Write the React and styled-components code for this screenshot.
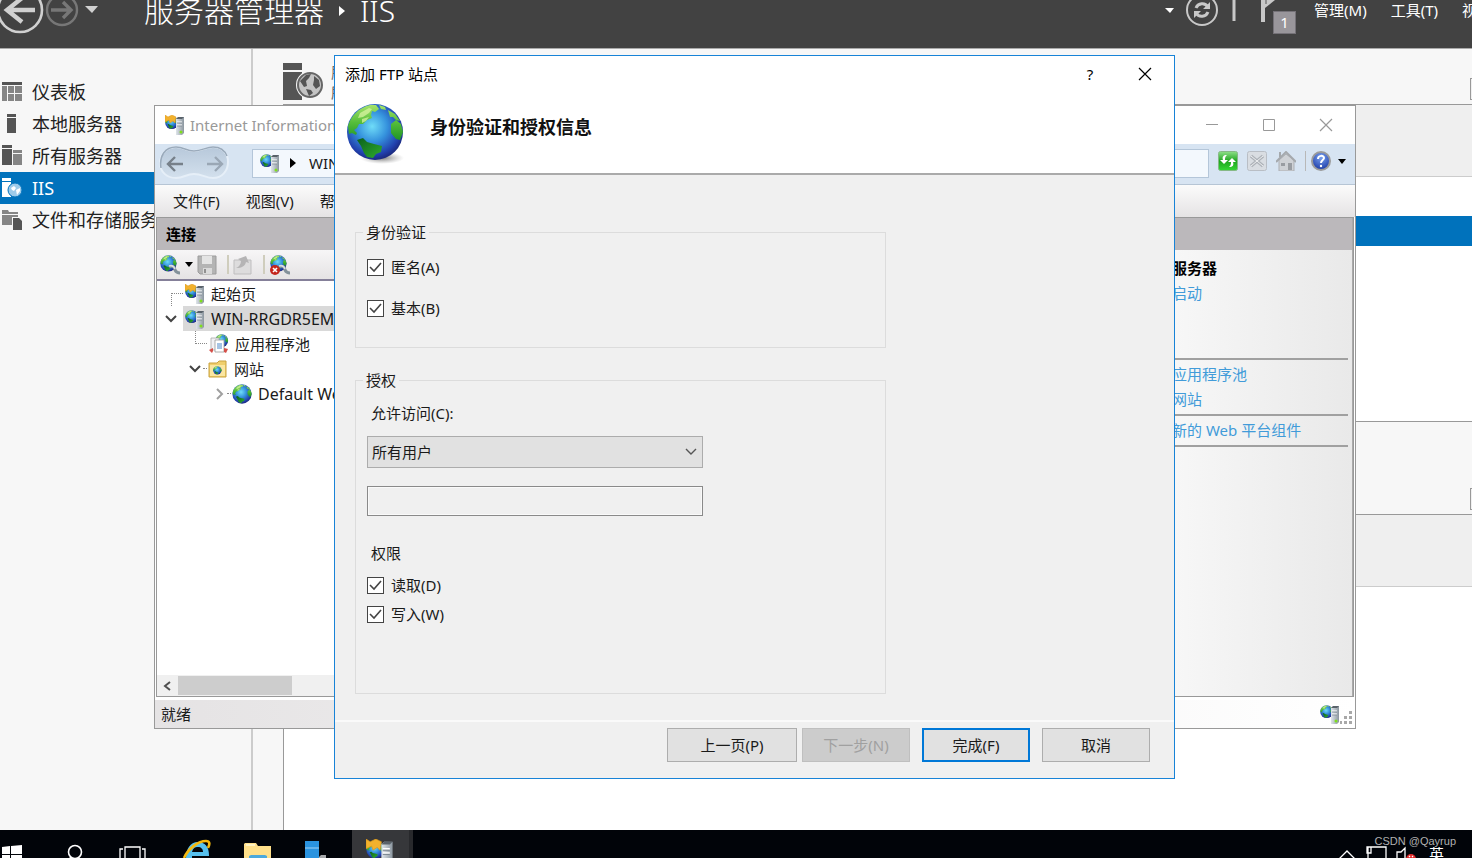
import React, { useState } from "react";
import styled, { createGlobalStyle } from "styled-components";

const GlobalStyle = createGlobalStyle`
  * {
    box-sizing: border-box;
  }

  body {
    margin: 0;
    font-family: "Noto Sans", "Noto Sans CJK SC", sans-serif;
    font-size: 15px;
    line-height: 20px;
    color: #1a1a1a;
  }

  button, input, select {
    font: inherit;
    color: inherit;
    margin: 0;
  }

  svg {
    display: block;
    flex: none;
  }
`;

/* ---------- icons ---------- */

function Defs() {
  return (
    <HiddenSvg aria-hidden="true">
      <defs>
        <radialGradient id="ocean" cx="0.45" cy="0.4" r="0.6">
          <stop offset="0" stopColor="#6fdcf8" />
          <stop offset="0.45" stopColor="#3592dd" />
          <stop offset="0.85" stopColor="#2140ad" />
          <stop offset="1" stopColor="#1b2a80" />
        </radialGradient>
        <linearGradient id="land" x1="0" y1="0" x2="0" y2="1">
          <stop offset="0" stopColor="#a5e36a" />
          <stop offset="0.5" stopColor="#55bd3a" />
          <stop offset="1" stopColor="#1f9426" />
        </linearGradient>
        <linearGradient id="darkLand" x1="0" y1="0" x2="1" y2="1">
          <stop offset="0" stopColor="#0b5f1c" />
          <stop offset="1" stopColor="#2fae2c" />
        </linearGradient>
        <linearGradient id="tower" x1="0" y1="0" x2="1" y2="0">
          <stop offset="0" stopColor="#dfe5ea" />
          <stop offset="1" stopColor="#8b969f" />
        </linearGradient>
        <linearGradient id="green" x1="0" y1="0" x2="0" y2="1">
          <stop offset="0" stopColor="#8fe08a" />
          <stop offset="0.5" stopColor="#1fa51f" />
          <stop offset="1" stopColor="#35d835" />
        </linearGradient>
        <linearGradient id="pill" x1="0" y1="0" x2="0" y2="1">
          <stop offset="0" stopColor="#b7c8da" />
          <stop offset="1" stopColor="#d3e0ed" />
        </linearGradient>
        <radialGradient id="help" cx="0.5" cy="0.3" r="0.7">
          <stop offset="0" stopColor="#7aa2f0" />
          <stop offset="1" stopColor="#1b3aa6" />
        </radialGradient>
        <radialGradient id="shade">
          <stop offset="0" stopColor="#555" stopOpacity="0.8" />
          <stop offset="1" stopColor="#999" stopOpacity="0" />
        </radialGradient>
      </defs>
    </HiddenSvg>
  );
}

function GlobeShape() {
  return (
    <g>
      <circle cx="29" cy="29" r="28" fill="url(#ocean)" />
      <path
        d="M2 23C5 13 12 5 24 2l6 0 3 4-4 3-3-1-1 4 1 3-5 2-4 4-4 0-2 4-3 2 3 3-1 2-4-2-3 1zM42 7l7 4 5 7-4-1-3-3-3 0zM33 2l6 2 1 3-5-1zM45 21l5-4 5 4 2 8-3 8-4-1-5-6z"
        fill="url(#land)"
      />
      <path d="M11 37l6-2 4 4 7 2 8 2-1 6-5 2-3 4-6-1-3-4-3-7z" fill="url(#darkLand)" />
      <path d="M14 10l9-5 3 1-3 4-6 4-5 1zM16 16l7-2-3 4-4 2z" fill="#def5a6" opacity="0.7" />
    </g>
  );
}

function BigGlobe() {
  return (
    <svg width="62" height="62" viewBox="0 0 62 62">
      <ellipse cx="36" cy="55" rx="22" ry="6" fill="url(#shade)" />
      <GlobeShape />
    </svg>
  );
}

function SmallGlobe() {
  return (
    <svg width="20" height="20" viewBox="0 0 58 58">
      <GlobeShape />
    </svg>
  );
}

function ServerGlobe({ size = 20, arrow }) {
  return (
    <svg width={size} height={size} viewBox="0 0 20 20">
      <g transform="translate(0 1) scale(0.23)">
        <GlobeShape />
      </g>
      {arrow && (
        <path d="M0 0l3 2 4-2 4 2-1 6-2-2-3 2-1-3-4 2z" fill="#f2b12d" stroke="#d9971a" strokeWidth="0.5" />
      )}
      <path d="M11 4l2-2h6v16l-2 2h-6z" fill="url(#tower)" />
      <path d="M13 2h6l-2 2h-6z" fill="#59626a" />
      <path d="M12 7h5M12 10h5" stroke="#fff" strokeWidth="1.2" />
      <path d="M12 8h5M12 11h5" stroke="#77828c" strokeWidth="0.7" />
      <circle cx="16" cy="17" r="1.5" fill="#7fe01c" />
    </svg>
  );
}

function ConnectIcon({ remove }) {
  return (
    <svg width="22" height="22" viewBox="0 0 22 22">
      <g transform="translate(1 1) scale(0.29)">
        <GlobeShape />
      </g>
      <path d="M10 13c3-2 6 0 6 3 1 2 3 3 5 3" fill="none" stroke="#83919a" strokeWidth="3" />
      <path d="M10 12c3-1 5 0 6 3" fill="none" stroke="#d6dde2" strokeWidth="1.5" />
      {remove && (
        <g>
          <circle cx="6" cy="16" r="5" fill="#c4261d" />
          <path d="M4 14l4 4M8 14l-4 4" stroke="#fff" strokeWidth="1.6" />
        </g>
      )}
    </svg>
  );
}

function SaveIcon() {
  return (
    <svg width="20" height="20" viewBox="0 0 20 20">
      <path d="M1 1h18v18H3l-2-2z" fill="#b4b4b4" stroke="#9c9c9c" />
      <path d="M5 1h10v8H5z" fill="#e4e4e4" />
      <path d="M6 13h9v6H6z" fill="#dadada" />
      <path d="M7 14h2v4H7z" fill="#909090" />
    </svg>
  );
}

function PasteIcon() {
  return (
    <svg width="20" height="20" viewBox="0 0 20 20">
      <path d="M1 5h17v14H1z" fill="#dddcdd" stroke="#bfbebf" />
      <path d="M3 13c3-1 5-4 5-7L5 4l8-3 3 7-3-1c-1 4-4 6-10 6z" fill="#b5b4b5" />
    </svg>
  );
}

function PoolIcon() {
  return (
    <svg width="20" height="20" viewBox="0 0 20 20">
      <g transform="translate(6 0) scale(0.23)">
        <GlobeShape />
      </g>
      <path d="M2 4h8v12H2z" fill="#f1f1f4" stroke="#aaa" strokeWidth="0.8" />
      <path d="M6 6h9v12H6z" fill="#fff" stroke="#999" strokeWidth="0.8" />
      <path d="M8 10h5M8 12h5M8 14h5" stroke="#4d88c8" />
      <path d="M0 16l4-2v3l-1 2zM19 15l-4-1v4l2 1z" fill="#d4504a" />
    </svg>
  );
}

function SitesIcon() {
  return (
    <svg width="20" height="20" viewBox="0 0 20 20">
      <path d="M1 4h8l2-2h7v16H1z" fill="#f0cf6c" stroke="#c9a23e" />
      <path d="M2 6h15v11H2z" fill="#fae6a0" />
      <g transform="translate(5 7) scale(0.15)">
        <GlobeShape />
      </g>
    </svg>
  );
}

function NavArrows() {
  return (
    <svg width="100" height="46" viewBox="0 -12 100 46" fill="none">
      <circle cx="20" cy="10" r="22" stroke="#d0d0d0" strokeWidth="2.6" />
      <path d="M35 10H8M22 -2L7 10l15 12" stroke="#d0d0d0" strokeWidth="4.4" />
      <circle cx="62" cy="10" r="15" stroke="#777" strokeWidth="2.4" />
      <path d="M51 10h20M63 2l8 8-8 8" stroke="#777" strokeWidth="3.4" />
      <path d="M85 6h13l-6 7z" fill="#d0d0d0" />
    </svg>
  );
}

function TopTools() {
  return (
    <svg width="140" height="46" viewBox="0 -12 140 46" fill="none">
      <path d="M5 8h9l-4 5z" fill="#fff" />
      <circle cx="42" cy="10" r="15" stroke="#c8c8c8" strokeWidth="2" />
      <path d="M36 8c2-5 9-6 12-1M48 12c-2 5-9 6-12 1" stroke="#c8c8c8" strokeWidth="3" />
      <path d="M50 2v7h-7zM34 18v-7h7z" fill="#c8c8c8" />
      <path d="M74 -12v33" stroke="#c8c8c8" strokeWidth="3" />
      <path d="M101 -12h4v34h-4z" fill="#c8c8c8" />
      <path d="M105 8l10-8 8-12h-18z" fill="#c8c8c8" />
      <path d="M106 4V-12" stroke="#555" strokeWidth="1" />
    </svg>
  );
}

function SideIcon({ kind }) {
  return (
    <svg width="22" height="22" viewBox="0 0 22 22">
      {kind === "dashboard" && (
        <g fill="#858585">
          <path d="M2 1h20v3H2z" fill="#555" />
          <path d="M2 5h5v15H2zM8 5h6v7H8zM15 5h7v7h-7zM8 13h6v7H8zM15 13h7v7h-7z" />
        </g>
      )}
      {kind === "local" && (
        <g fill="#555">
          <path d="M7 1h9v3H7zM7 5h9v15H7z" />
        </g>
      )}
      {kind === "all" && (
        <g>
          <path d="M2 0h10v3H2zM2 4h10v16H2z" fill="#555" />
          <path d="M13 5h9v3h-9zM13 9h9v11h-9z" fill="#858585" />
        </g>
      )}
      {kind === "iis" && (
        <g>
          <path d="M2 1h9v3H2zM2 5h9v15H2z" fill="#fff" />
          <circle cx="15" cy="13" r="7" fill="#9ecbea" stroke="#0072bc" />
          <path d="M11 11l3-2 2 2-2 3-2-1zM16 13l4-2v3l-3 4z" fill="#fff" />
        </g>
      )}
      {kind === "storage" && (
        <g>
          <path d="M2 1h6l1 2h9v2H2zM2 6h10v10H2zM12 6h6v2h-6z" fill="#858585" />
          <path d="M13 9h6l3 3v9h-9z" fill="#555" />
        </g>
      )}
    </svg>
  );
}

function HeadIcon() {
  return (
    <svg width="42" height="38" viewBox="0 0 42 38">
      <path d="M0 0h19v7H0zM0 9h19v28H0z" fill="#555" />
      <circle cx="27" cy="22" r="14" fill="#f7f7f7" />
      <circle cx="27" cy="22" r="12" fill="#c4c4c4" stroke="#666" strokeWidth="2" />
      <path d="M17 18l6-6 5-1-2 4-3 3 1 5-3 1zM31 13l5 4 1 6-4 3-3-4 1-5zM23 26l5 1 2 3-4 3z" fill="#555" />
    </svg>
  );
}

function TaskIcon({ kind }) {
  return (
    <svg width="61" height="28" viewBox="0 0 61 28" fill="none">
      {kind === "search" && (
        <g stroke="#fff" strokeWidth="1.6">
          <circle cx="31" cy="22" r="6.5" />
          <path d="M27 27l-4 5" />
        </g>
      )}
      {kind === "taskview" && (
        <path d="M20 28V17h15v11M18 19h-3v9M37 19h3v9" stroke="#fff" strokeWidth="1.3" />
      )}
      {kind === "ie" && (
        <g>
          <path d="M20 28c0-9 4-16 12-16 7 0 11 5 11 13v3H19z" fill="#57c1ee" />
          <path d="M26 22c1-4 3-5 6-5s5 2 5 5z" fill="#04060a" />
          <path d="M26 26h17v2H26z" fill="#04060a" />
          <path d="M18 28C22 19 32 11 40 11c4 0 4 3 2 7" stroke="#f5b90f" strokeWidth="2.6" />
        </g>
      )}
      {kind === "folder" && (
        <g>
          <path d="M17 28V14l1-1h11l2 3h13v12z" fill="#ffe08a" />
          <path d="M19 14h9v2h-9z" fill="#fff3c4" />
          <path d="M22 28v-2l2-1h14l2 1v2z" fill="#4ba9dc" />
        </g>
      )}
      {kind === "manager" && (
        <g>
          <path d="M17 11h14v17H17z" fill="#2a93df" />
          <path d="M17 18h14" stroke="#9fd2f5" />
          <path d="M31 27l2-2h5v3h-7z" fill="#a7a9ab" />
        </g>
      )}
    </svg>
  );
}

function StartIcon() {
  return (
    <svg width="44" height="28" viewBox="0 0 44 28" fill="#fff">
      <path d="M2 17l8-1v8H2zM11 16l11-1v9H11zM2 25h8v3H2zM11 25h11v3H11z" />
    </svg>
  );
}

function TrayIcons() {
  return (
    <svg width="84" height="28" viewBox="0 0 84 28" fill="none" stroke="#fff" strokeWidth="1.3">
      <path d="M2 29l8-8 8 8M31 28V17h18v11M30 17h4v6h-4zM60 28v-6h4l4-4v10" />
      <circle cx="74" cy="29" r="5" fill="#e02b2b" stroke="none" />
      <path d="M72 26l1 1M76 26l-1 1" />
    </svg>
  );
}

function Pill() {
  return (
    <svg width="72" height="34" viewBox="0 0 72 34" fill="none">
      <path
        d="M17 1c8 0 10 4 18 4s12-4 19-4c9 0 15 6 15 15s-6 16-15 16c-7 0-11-4-19-4s-10 4-18 4C8 32 1 26 1 17S8 1 17 1z"
        fill="url(#pill)"
        stroke="#e6eff8"
        strokeWidth="2"
      />
      <path d="M2 22C0 10 6 1 17 1c8 0 10 4 18 4s12-4 19-4c7 0 12 4 14 9" stroke="#9aaabb" strokeWidth="1.5" />
      <path d="M24 18H10M16 11l-7 7 7 7" stroke="#77808a" strokeWidth="2.4" />
      <path d="M48 18h14M56 11l7 7-7 7" stroke="#9aa7b5" strokeWidth="2.4" />
    </svg>
  );
}

function AddressIcon({ kind }) {
  return (
    <svg width="20" height="20" viewBox="0 0 20 20" fill="none">
      {kind === "refresh" && (
        <g>
          <rect x="0.5" y="0.5" width="19" height="19" rx="2" fill="url(#green)" stroke="#86b886" />
          <path
            d="M9 4C5 4 4 6 5 9H2l4 4 4-4H7c0-2 0-3 2-5zM11 16c4 0 5-2 4-5h3l-4-4-4 4h3c0 2 0 3-2 5z"
            fill="#fff"
          />
        </g>
      )}
      {kind === "stop" && (
        <g>
          <rect x="0.5" y="0.5" width="19" height="19" rx="2" fill="#d9dde2" stroke="#b9bec5" />
          <path d="M4 5l12 10M16 5L4 15" stroke="#aeb3b9" strokeWidth="3.5" />
          <path d="M4 5l12 10M16 5L4 15" stroke="#eef0f2" />
        </g>
      )}
      {kind === "home" && (
        <g>
          <path d="M3 9v11h15V9l-8-6z" fill="#cfd2d6" stroke="#acafb3" />
          <path d="M0 11L10 1l10 10M4 6V1" stroke="#a5a9ad" strokeWidth="2" />
          <path d="M5 12h4v3H5zM12 12h4v7h-4z" fill="#999da2" />
        </g>
      )}
      {kind === "help" && (
        <g>
          <circle cx="10" cy="10" r="9" fill="url(#help)" stroke="#9b9b9b" strokeWidth="2" />
          <path d="M7 8c0-4 6-4 6-1 0 2-3 2-3 5" stroke="#fff" strokeWidth="2" />
          <circle cx="10" cy="15" r="1.2" fill="#fff" />
        </g>
      )}
    </svg>
  );
}

function Triangle() {
  return (
    <svg width="8" height="5" viewBox="0 0 8 5">
      <path d="M0 0h8L4 5z" fill="#000" />
    </svg>
  );
}

function CrossIcon() {
  return (
    <svg width="14" height="14" viewBox="0 0 14 14" fill="none" stroke="currentColor" strokeWidth="1.2">
      <path d="M1 1l12 12M13 1L1 13" />
    </svg>
  );
}

function Chevron({ open }) {
  return (
    <svg width="12" height="12" viewBox="0 0 12 12" fill="none">
      {open ? (
        <path d="M1 3l5 5 5-5" stroke="#444" strokeWidth="2" />
      ) : (
        <path d="M4 1l5 5-5 5" stroke="#a0a0a0" strokeWidth="2" />
      )}
    </svg>
  );
}

/* ---------- server manager ---------- */

const sideItems = [
  { kind: "dashboard", label: "仪表板" },
  { kind: "local", label: "本地服务器" },
  { kind: "all", label: "所有服务器" },
  { kind: "iis", label: "IIS", active: true },
  { kind: "storage", label: "文件和存储服务" },
];

function ServerManager() {
  return (
    <Manager>
      <TopBar>
        <NavArrows />
        <Crumb>
          服务器管理器
          <svg width="8" height="12" viewBox="0 0 8 12">
            <path d="M1 1l6 5-6 5z" fill="#fff" />
          </svg>
          IIS
        </Crumb>
        <TopRight>
          <FlagBox>
            <TopTools />
            <Badge>1</Badge>
          </FlagBox>
          <TopMenu>
            <TopLink>管理(M)</TopLink>
            <TopLink>工具(T)</TopLink>
            <TopLink>视图(V)</TopLink>
          </TopMenu>
        </TopRight>
      </TopBar>
      <ManagerBody>
        <Sidebar>
          {sideItems.map((item) => (
            <SideItem key={item.kind} href="#" $active={item.active}>
              <SideIcon kind={item.kind} />
              {item.label}
            </SideItem>
          ))}
        </Sidebar>
        <Tiles>
          <TileHead $height={55}>
            <HeadIcon />
            <HeadText>
              服务器
              <span>所有服务器</span>
            </HeadText>
            <TaskButton aria-label="任务" />
          </TileHead>
          <Tile $height={317}>
            <TileFilter />
            <TileSelected />
          </Tile>
          <TileHead $height={92}>
            <TaskButton aria-label="任务" />
          </TileHead>
          <Tile>
            <TileFilter />
          </Tile>
        </Tiles>
      </ManagerBody>
    </Manager>
  );
}

/* ---------- IIS window ---------- */

function IISManager() {
  return (
    <IISWindow>
      <IISTitle>
        <ServerGlobe arrow />
        <span>Internet Information</span>
        <IISControls>
          <IconButton aria-label="最小化">
            <svg width="12" height="12" viewBox="0 0 12 12">
              <path d="M0 5.5h12" stroke="currentColor" />
            </svg>
          </IconButton>
          <IconButton aria-label="最大化">
            <svg width="12" height="12" viewBox="0 0 12 12">
              <path d="M0.5 0.5h11v11H0.5z" fill="none" stroke="currentColor" />
            </svg>
          </IconButton>
          <IconButton aria-label="关闭">
            <CrossIcon />
          </IconButton>
        </IISControls>
      </IISTitle>
      <AddressBar>
        <Pill />
        <Address>
          <ServerGlobe />
          <svg width="6" height="10" viewBox="0 0 6 10">
            <path d="M0 0l6 5-6 5z" />
          </svg>
          <span>WIN-RRGDR5EM</span>
        </Address>
        <AddressTools>
          <AddressIcon kind="refresh" />
          <AddressIcon kind="stop" />
          <AddressIcon kind="home" />
          <HelpGroup>
            <AddressIcon kind="help" />
            <Triangle />
          </HelpGroup>
        </AddressTools>
      </AddressBar>
      <MenuBar>
        <span>文件(F)</span>
        <span>视图(V)</span>
        <span>帮助(H)</span>
      </MenuBar>
      <Panels>
        <ConnectionPanel>
          <PanelHead>连接</PanelHead>
          <ToolBar>
            <ConnectIcon />
            <Triangle />
            <SaveIcon />
            <ToolSeparator />
            <PasteIcon />
            <ToolSeparator />
            <ConnectIcon remove />
          </ToolBar>
          <Tree>
            <TreeRow $depth={0}>
              <Dots $corner />
              <ServerGlobe arrow />
              起始页
            </TreeRow>
            <TreeRow $depth={0} $latin>
              <Chevron open />
              <TreeSelected>
                <ServerGlobe />
                WIN-RRGDR5EM
              </TreeSelected>
            </TreeRow>
            <TreeRow $depth={1}>
              <Dots $rail />
              <PoolIcon />
              应用程序池
            </TreeRow>
            <TreeRow $depth={1}>
              <Chevron open />
              <ShortDots />
              <SitesIcon />
              网站
            </TreeRow>
            <TreeRow $depth={2} $latin>
              <Chevron />
              <ShortDots />
              <SmallGlobe />
              Default Web
            </TreeRow>
          </Tree>
          <ScrollBar>
            <svg width="8" height="10" viewBox="0 0 8 10" fill="none">
              <path d="M7 1L2 5l5 4" stroke="#505050" strokeWidth="2" />
            </svg>
            <ScrollThumb />
          </ScrollBar>
        </ConnectionPanel>
        <ActionPanel>
          <PanelHead />
          <Actions>
            <ActionTitle>管理服务器</ActionTitle>
            <ActionLink href="#">重新启动</ActionLink>
            <ActionGap />
            <ActionRule />
            <ActionLink href="#">查看应用程序池</ActionLink>
            <ActionLink href="#">查看网站</ActionLink>
            <ActionRule />
            <ActionLink href="#">获取新的 Web 平台组件</ActionLink>
            <ActionRule />
          </Actions>
        </ActionPanel>
      </Panels>
      <StatusBar>
        就绪
        <StatusIcons>
          <ServerGlobe />
          <svg width="12" height="13" viewBox="1 0 12 13" fill="#a8a8a8">
            <path d="M10 0h3v3h-3zM5 5h3v3H5zM10 5h3v3h-3zM1 10h2v3H1zM5 10h3v3H5zM10 10h3v3h-3z" />
          </svg>
        </StatusIcons>
      </StatusBar>
    </IISWindow>
  );
}

/* ---------- wizard dialog ---------- */

function CheckField({ id, label }) {
  const [checked, setChecked] = useState(true);

  return (
    <CheckRow htmlFor={id}>
      <CheckBox>
        <input id={id} type="checkbox" checked={checked} onChange={(e) => setChecked(e.target.checked)} />
        {checked && (
          <svg width="17" height="17" viewBox="0 0 17 17" fill="none">
            <path d="M3 8l4 4 7-8" stroke="#444" strokeWidth="1.6" />
          </svg>
        )}
      </CheckBox>
      {label}
    </CheckRow>
  );
}

function FtpDialog() {
  return (
    <Dialog role="dialog" aria-labelledby="ftp-title">
      <DialogTitle>
        <span id="ftp-title">添加 FTP 站点</span>
        <DialogControls>
          <IconButton aria-label="帮助">?</IconButton>
          <IconButton aria-label="关闭">
            <CrossIcon />
          </IconButton>
        </DialogControls>
      </DialogTitle>
      <Banner>
        <BigGlobe />
        <BannerTitle>身份验证和授权信息</BannerTitle>
      </Banner>
      <DialogBody>
        <Group>
          <legend>身份验证</legend>
          <AuthFields>
            <CheckField id="anonymous" label="匿名(A)" />
            <CheckField id="basic" label="基本(B)" />
          </AuthFields>
        </Group>
        <Group>
          <legend>授权</legend>
          <AccessFields>
            <FieldLabel htmlFor="access">允许访问(C):</FieldLabel>
            <SelectBox>
              <select id="access" defaultValue="all">
                <option value="all">所有用户</option>
              </select>
              <svg width="12" height="8" viewBox="0 0 12 8" fill="none">
                <path d="M1 1l5 5 5-5" stroke="#555" strokeWidth="1.4" />
              </svg>
            </SelectBox>
            <UserInput type="text" aria-label="用户" disabled />
          </AccessFields>
          <PermissionFields>
            <FieldLabel as="span">权限</FieldLabel>
            <CheckList>
              <CheckField id="read" label="读取(D)" />
              <CheckField id="write" label="写入(W)" />
            </CheckList>
          </PermissionFields>
        </Group>
      </DialogBody>
      <Footer>
        <Pager>
          <DialogButton $wide>上一页(P)</DialogButton>
          <DialogButton disabled>下一步(N)</DialogButton>
        </Pager>
        <DialogButton $primary>完成(F)</DialogButton>
        <DialogButton>取消</DialogButton>
      </Footer>
    </Dialog>
  );
}

function TaskBar() {
  return (
    <Bar>
      <TaskBarButton aria-label="开始">
        <StartIcon />
      </TaskBarButton>
      {["search", "taskview", "ie", "folder", "manager"].map((kind) => (
        <TaskBarButton key={kind} aria-label={kind}>
          <TaskIcon kind={kind} />
        </TaskBarButton>
      ))}
      <TaskBarButton aria-label="IIS" $active>
        <ServerGlobe size={28} arrow />
      </TaskBarButton>
      <Tray>
        <TrayIcons />
        <span>英</span>
      </Tray>
      <Watermark>CSDN @Qayrup</Watermark>
    </Bar>
  );
}

function App() {
  return (
    <Desktop>
      <GlobalStyle />
      <Defs />
      <ServerManager />
      <IISManager />
      <FtpDialog />
      <TaskBar />
    </Desktop>
  );
}

const HiddenSvg = styled.svg`
  position: absolute;
  width: 0;
  height: 0;
`;

const Desktop = styled.div`
  position: relative;
  display: flex;
  flex-direction: column;
  height: 100vh;
  overflow: hidden;
  background: #fff;
`;

const Manager = styled.div`
  flex: 1;
  display: flex;
  flex-direction: column;
  min-height: 0;
`;

const TopBar = styled.header`
  display: flex;
  align-items: center;
  height: 49px;
  margin-right: -38px;
  padding-bottom: 26px;
  background: #424242;
  border-bottom: 1px solid #aaa;
`;

const Crumb = styled.h1`
  display: flex;
  align-items: center;
  gap: 14px;
  margin: 0 0 0 44px;
  font-size: 30px;
  font-weight: 300;
  line-height: 40px;
  color: #fff;
`;

const TopRight = styled.div`
  display: flex;
  align-items: center;
  gap: 14px;
  margin-left: auto;
`;

const FlagBox = styled.div`
  position: relative;
`;

const Badge = styled.span`
  position: absolute;
  right: 4px;
  bottom: 0;
  width: 23px;
  height: 23px;
  background: #99969b;
  border: 1px solid #757278;
  color: #fff;
  text-align: center;
`;

const TopMenu = styled.nav`
  display: flex;
  gap: 24px;
  padding-bottom: 2px;
`;

const TopLink = styled.button`
  padding: 0;
  border: none;
  background: none;
  color: #fff;
  white-space: nowrap;
`;

const ManagerBody = styled.div`
  flex: 1;
  display: flex;
  min-height: 0;
`;

const Sidebar = styled.nav`
  width: 253px;
  padding-top: 27px;
  background: #f7f7f7;
  border-right: 2px solid #ccc;
`;

const SideItem = styled.a`
  display: flex;
  align-items: center;
  gap: 10px;
  height: 32px;
  font-size: 18px;
  text-decoration: none;
  color: ${(props) => (props.$active ? "#fff" : "#222")};
  background: ${(props) => (props.$active ? "#0072bc" : "transparent")};
`;

const Tiles = styled.main`
  flex: 1;
  display: flex;
  flex-direction: column;
  padding-left: 30px;
  background: #f7f7f7;
`;

const TileHead = styled.div`
  display: flex;
  align-items: center;
  gap: 6px;
  flex: none;
  height: ${(props) => props.$height}px;
  padding-top: 10px;
`;

const HeadText = styled.div`
  display: flex;
  flex-direction: column;
  color: #666;
`;

const TaskButton = styled.button`
  align-self: flex-end;
  width: 40px;
  height: 22px;
  margin: 0 -38px 4px auto;
  border: 1px solid #999;
  background: #f0f0f0;
`;

const Tile = styled.section`
  flex: ${(props) => (props.$height ? "none" : "1")};
  height: ${(props) => (props.$height ? props.$height + 1 + "px" : "auto")};
  background: #fff;
  border-top: 1px solid #999;
  border-left: 1px solid #999;
  border-bottom: ${(props) => (props.$height ? "1px solid #999" : "none")};
`;

const TileFilter = styled.div`
  height: 72px;
  background: #efefef;
  border-bottom: 1px solid #ccc;
`;

const TileSelected = styled.div`
  height: 30px;
  margin-top: 39px;
  background: #0072bc;
`;

const IISWindow = styled.section`
  position: absolute;
  top: 105px;
  right: 116px;
  bottom: 129px;
  left: 154px;
  display: flex;
  flex-direction: column;
  background: #fff;
  border: 1px solid #999;
`;

const IISTitle = styled.div`
  display: flex;
  align-items: center;
  gap: 5px;
  height: 38px;
  padding-left: 10px;
  color: #999;
`;

const IISControls = styled.div`
  display: flex;
  gap: 37px;
  margin-left: auto;
  padding-right: 19px;
`;

const IconButton = styled.button`
  display: flex;
  align-items: center;
  justify-content: center;
  width: 20px;
  height: 20px;
  padding: 0;
  border: none;
  background: none;
`;

const AddressBar = styled.div`
  display: flex;
  align-items: center;
  height: 41px;
  padding: 0 9px 2px 4px;
  background: #d7e4f2;
  border-bottom: 1px solid #b6c5d5;
`;

const Address = styled.div`
  flex: 1;
  display: flex;
  align-items: center;
  gap: 10px;
  height: 29px;
  margin-left: 21px;
  padding-left: 7px;
  background: #f3f8fd;
  border: 1px solid #b4c6d9;

  span {
    margin-left: 3px;
  }
`;

const AddressTools = styled.div`
  display: flex;
  gap: 9px;
  padding: 0 0 4px 9px;
`;

const HelpGroup = styled.div`
  display: flex;
  align-items: center;
  gap: 7px;
  padding-left: 5px;
  border-left: 1px solid #b8b8b8;
`;

const MenuBar = styled.div`
  display: flex;
  align-items: center;
  gap: 26px;
  height: 32px;
  padding-left: 18px;
  background: linear-gradient(#fbfbfb, #e5e3e4);
`;

const Panels = styled.div`
  flex: 1;
  display: flex;
  justify-content: space-between;
  min-height: 0;
  margin: 0 1px;
  border: 1px solid #999;
`;

const ConnectionPanel = styled.div`
  display: flex;
  flex-direction: column;
  width: 250px;
`;

const PanelHead = styled.div`
  height: 32px;
  padding: 6px 9px;
  background: #bbb8bb;
  font-weight: 700;
  color: #000;
`;

const ToolBar = styled.div`
  display: flex;
  align-items: center;
  gap: 4px;
  height: 31px;
  padding-left: 2px;
  background: linear-gradient(#f7f6f7, #e5e3e4);
  border-bottom: 2px solid #858099;
`;

const ToolSeparator = styled.span`
  width: 2px;
  height: 19px;
  margin-left: 6px;
  background: #cfcdbd;
`;

const Tree = styled.div`
  flex: 1;
  background: #fff;
`;

const TreeRow = styled.div`
  display: flex;
  align-items: center;
  gap: 6px;
  height: 25px;
  padding-left: ${(props) => 8 + props.$depth * 24}px;
  font-size: ${(props) => (props.$latin ? 16 : 15)}px;
  white-space: nowrap;
`;

const TreeSelected = styled.span`
  display: flex;
  align-items: center;
  flex: 1;
  gap: 6px;
  height: 25px;
  padding-left: 2px;
  background: #d9d9d9;
`;

const Dots = styled.span`
  align-self: ${(props) => (props.$rail ? "flex-start" : "flex-end")};
  width: 12px;
  height: 13px;
  margin-left: 6px;
  margin-right: -4px;
  border-left: 1px dotted #888;
  border-top: ${(props) => (props.$corner ? "1px dotted #888" : "none")};
  border-bottom: ${(props) => (props.$rail ? "1px dotted #888" : "none")};
`;

const ShortDots = styled.span`
  width: 4px;
  margin: 0 -5px 0 -4px;
  border-top: 1px dotted #888;
`;

const ScrollBar = styled.div`
  display: flex;
  align-items: center;
  gap: 7px;
  height: 21px;
  padding-left: 6px;
  background: #f0f0f0;
`;

const ScrollThumb = styled.div`
  width: 114px;
  height: 19px;
  background: #cdcdcd;
`;

const ActionPanel = styled.div`
  width: 218px;
  background: linear-gradient(90deg, #fafafa, #e9e9e9);
  border-right: 1px solid #aaa;
`;

const Actions = styled.div`
  padding: 6px 4px 0 0;
`;

const ActionTitle = styled.div`
  padding-left: 7px;
  line-height: 25px;
  font-weight: 700;
  color: #000;
`;

const ActionLink = styled.a`
  display: block;
  padding-left: 7px;
  line-height: 25px;
  color: #419bd9;
  text-decoration: none;
`;

const ActionGap = styled.div`
  height: 50px;
`;

const ActionRule = styled.hr`
  height: 2px;
  margin: 2px 0;
  border: none;
  background: #a0a0a0;
`;

const StatusBar = styled.div`
  display: flex;
  align-items: center;
  justify-content: space-between;
  height: 28px;
  margin-top: 3px;
  padding: 0 3px 0 6px;
  background: linear-gradient(90deg, #e5e3e4, #fff);
`;

const StatusIcons = styled.div`
  display: flex;
  align-items: flex-end;
`;

const Dialog = styled.section`
  position: absolute;
  top: 55px;
  right: 297px;
  left: 334px;
  background: #f0f0f0;
  border: 1px solid #1883d7;
`;

const DialogTitle = styled.div`
  display: flex;
  align-items: center;
  justify-content: space-between;
  height: 36px;
  padding: 0 19px 0 10px;
  background: #fff;
  color: #000;
`;

const DialogControls = styled.div`
  display: flex;
  gap: 35px;
`;

const Banner = styled.div`
  display: flex;
  gap: 22px;
  height: 83px;
  padding: 11px;
  background: #fff;
  border-bottom: 2px solid #aaa;
`;

const BannerTitle = styled.h2`
  margin: 14px 0 0;
  font-size: 18px;
  line-height: 20px;
  font-weight: 700;
  color: #111;
`;

const DialogBody = styled.div`
  display: flex;
  flex-direction: column;
  gap: 22px;
  padding: 47px 20px 26px;
`;

const Group = styled.fieldset`
  width: 100%;
  max-width: 531px;
  margin: 0;
  padding: 0 11px;
  border: 1px solid #dcdcdc;

  legend {
    margin-left: -4px;
    padding: 0 3px;
  }
`;

const AuthFields = styled.div`
  display: flex;
  flex-direction: column;
  gap: 21px;
  padding: 15px 0 29px;
`;

const AccessFields = styled.div`
  display: flex;
  flex-direction: column;
  max-width: 336px;
  padding-top: 13px;
`;

const PermissionFields = styled.div`
  display: flex;
  flex-direction: column;
  gap: 12px;
  padding: 27px 0 69px;
`;

const CheckList = styled.div`
  display: flex;
  flex-direction: column;
  gap: 9px;
`;

const CheckRow = styled.label`
  display: flex;
  align-items: center;
  align-self: flex-start;
  gap: 7px;
`;

const CheckBox = styled.span`
  display: grid;

  input, svg {
    grid-area: 1 / 1;
  }

  input {
    appearance: none;
    width: 17px;
    height: 17px;
    background: #fff;
    border: 1px solid #444;
  }

  svg {
    pointer-events: none;
  }
`;

const FieldLabel = styled.label`
  padding-left: 4px;
`;

const SelectBox = styled.div`
  display: grid;
  align-items: center;
  margin-top: 13px;

  select, svg {
    grid-area: 1 / 1;
  }

  select {
    appearance: none;
    width: 100%;
    height: 32px;
    padding: 0 4px;
    background: #e1e1e1;
    border: 1px solid #acacac;
    border-radius: 0;
  }

  svg {
    justify-self: end;
    margin-right: 6px;
    pointer-events: none;
  }
`;

const UserInput = styled.input`
  height: 30px;
  margin-top: 18px;
  background: #f0f0f0;
  border: 1px solid #8a8a8a;
  box-shadow: inset 0 0 0 1px #fafafa;
`;

const Footer = styled.div`
  display: flex;
  justify-content: flex-end;
  gap: 12px;
  padding: 6px 24px 16px;
  border-top: 2px solid #fafafa;
`;

const Pager = styled.div`
  display: flex;
  gap: 5px;
`;

const DialogButton = styled.button`
  width: ${(props) => (props.$wide ? 130 : 108)}px;
  height: 34px;
  padding: 0;
  background: #e1e1e1;
  border: ${(props) => (props.$primary ? "2px solid #0078d7" : "1px solid #adadad")};

  &:disabled {
    background: #ccc;
    border-color: #bfbfbf;
    color: #a0a0a0;
  }
`;

const Bar = styled.footer`
  position: relative;
  display: flex;
  height: 28px;
  background: #010409;
  overflow: hidden;
`;

const TaskBarButton = styled.button`
  padding: ${(props) => (props.$active ? "9px 15px 0 14px" : "0")};
  margin-left: ${(props) => (props.$active ? "3px" : "0")};
  border: none;
  border-right: ${(props) => (props.$active ? "4px solid #28292c" : "none")};
  background: ${(props) => (props.$active ? "#36373a" : "none")};
`;

const Tray = styled.div`
  display: flex;
  gap: 8px;
  margin-left: auto;
  padding-right: 28px;
  color: #fff;

  span {
    padding-top: 14px;
  }
`;

const Watermark = styled.span`
  position: absolute;
  right: 16px;
  top: 1px;
  font-family: "Liberation Sans", sans-serif;
  font-size: 11px;
  color: #b0b0b0;
`;

export default App;
